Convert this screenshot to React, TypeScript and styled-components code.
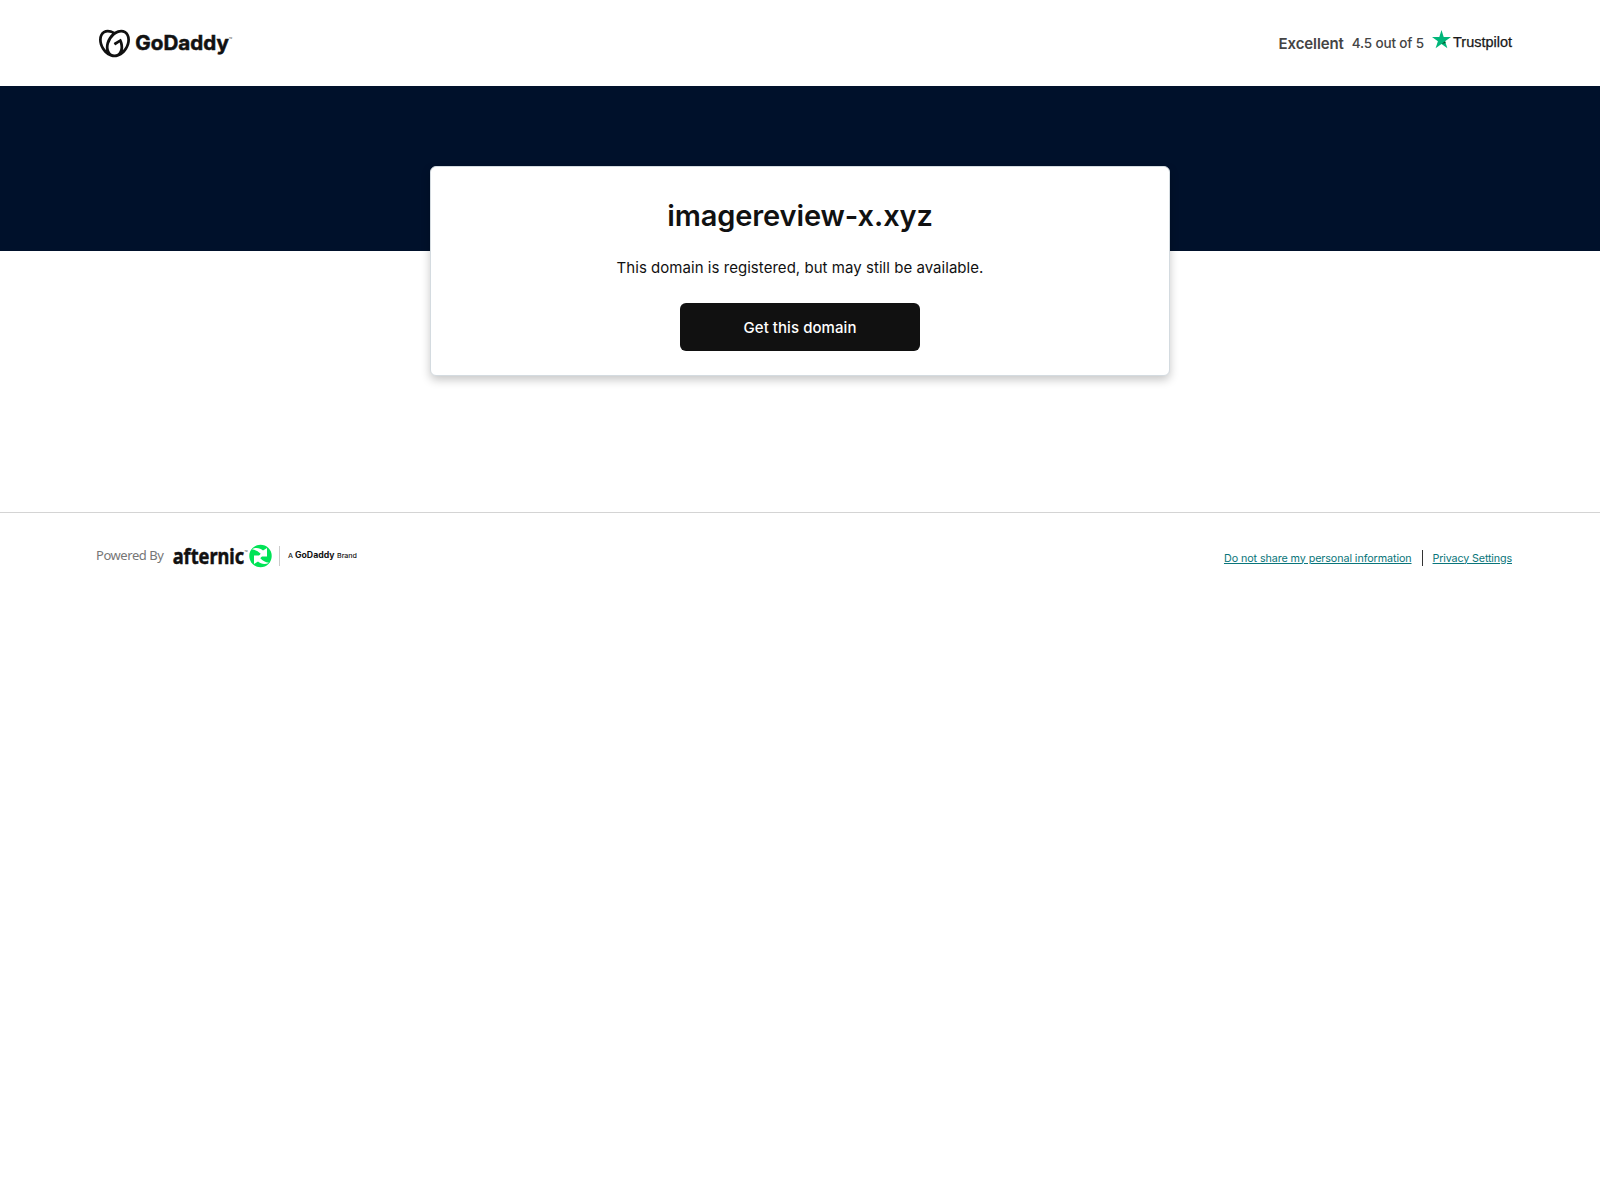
import React from "react";
import styled, { createGlobalStyle } from "styled-components";
import { SiGodaddy } from "react-icons/si";

const GlobalStyle = createGlobalStyle`
  *, *::before, *::after { box-sizing: border-box; }
  body {
    margin: 0;
    background: #fff;
    color: #111;
    font-family: Inter, "Noto Sans", "Liberation Sans", sans-serif;
  }
`;

const Header = styled.header`
  display: flex;
  justify-content: space-between;
  align-items: center;
  height: 86px;
  padding: 0 88px 0 96px;
`;

const Brand = styled.div`
  display: flex;
  align-items: center;
  gap: 5px;
  padding-left: 3px;
  color: #111;
`;

const Wordmark = styled.svg`
  display: block;
  overflow: visible;
  letter-spacing: 0;
`;

const Rating = styled.div`
  display: flex;
  align-items: center;
  color: #444;
  line-height: 24px;
`;

const Verdict = styled.span`
  font-size: 15px;
  font-weight: 600;
  letter-spacing: -0.1px;
  margin: 1px 8px 0 0;
`;

const Score = styled.span`
  font-size: 13.5px;
  font-weight: 500;
  letter-spacing: -0.15px;
  margin-right: 8px;
`;

const Hero = styled.section`
  display: flex;
  justify-content: center;
  align-items: flex-start;
  height: 165px;
  padding-top: 80px;
  background: #00112b;
`;

const Card = styled.main`
  display: flex;
  flex-direction: column;
  align-items: center;
  width: 740px;
  height: 210px;
  padding-top: 28px;
  background: #fff;
  border: 1px solid #d4dbe0;
  border-radius: 6px;
  box-shadow: 0 4px 10px rgba(0, 0, 0, 0.22);
`;

const Domain = styled.h1`
  margin: 0;
  font-size: 29px;
  line-height: 41px;
  font-weight: 640;
  letter-spacing: -0.1px;
`;

const Message = styled.p`
  margin: 20px 0 23px;
  font-size: 15px;
  line-height: 24px;
  letter-spacing: 0.04px;
`;

const BuyButton = styled.button`
  width: 240px;
  height: 48px;
  padding: 2px 0 0;
  border: 0;
  border-radius: 6px;
  background: #111;
  color: #fff;
  font: 500 15px/24px Inter, "Noto Sans", sans-serif;
  letter-spacing: 0.06px;
  cursor: pointer;
`;

const Footer = styled.footer`
  display: flex;
  justify-content: space-between;
  align-items: center;
  height: 86px;
  margin-top: 261px;
  padding: 0 88px 0 96px;
  border-top: 1px solid #d4d4d4;
`;

const Powered = styled.div`
  display: flex;
  align-items: center;
  color: #767676;
`;

const PoweredLabel = styled.span`
  width: 77px;
  padding-bottom: 1px;
  font-family: "Noto Sans", sans-serif;
  font-size: 13px;
  line-height: 23px;
  letter-spacing: -0.45px;
  white-space: nowrap;
`;

const Links = styled.nav`
  display: flex;
  align-items: center;
  gap: 10px;
  padding-top: 4px;
`;

const FooterLink = styled.a<{ $tracking: number }>`
  padding-top: 1px;
  color: #09757a;
  font-size: 10.75px;
  line-height: 17px;
  letter-spacing: ${(p) => p.$tracking}px;
  text-decoration: underline;
`;

const Separator = styled.span`
  width: 1px;
  height: 16px;
  background: #333;
`;

function GoDaddyLogo() {
  return (
    <Brand>
      <SiGodaddy size={31} />
      <Wordmark width="98" height="36" viewBox="0 0 98 36" fill="#111">
        <text x="0.3" y="25.200" fontFamily="Inter, sans-serif" fontSize="20" fontWeight="700" stroke="#111" strokeWidth="0.5" textLength="93.500" lengthAdjust="spacingAndGlyphs">GoDaddy</text>
        <text x="94" y="14" fontFamily="Inter, sans-serif" fontSize="2">TM</text>
      </Wordmark>
    </Brand>
  );
}

function TrustpilotLogo() {
  return (
    <Wordmark width="80" height="24" viewBox="0 0 80 24">
      <path d="M9.500-1 11.700 6H19l-5.900 4.300 2.300 7-5.900-4.300-5.900 4.300 2.300-7L0 6h7.300z" fill="#00b67a" />
      <path d="m13.600 11.900-.5-1.600-3.600 2.700z" fill="#005128" />
      <text x="21" y="16" fontFamily="Liberation Sans, sans-serif" fontSize="14" fill="#191919" stroke="#191919" strokeWidth="0.25" textLength="59" lengthAdjust="spacingAndGlyphs">Trustpilot</text>
    </Wordmark>
  );
}

function AfternicLogo() {
  return (
    <Wordmark width="186" height="24" viewBox="0 0 186 24" fill="#111">
      <text x="-0.3" y="20" fontFamily="Noto Sans, sans-serif" fontSize="21" fontWeight="700" stroke="#111" strokeWidth="0.5" strokeLinejoin="round" textLength="71.500" lengthAdjust="spacingAndGlyphs">afternic</text>
      <text x="71.500" y="8" fontFamily="Inter, sans-serif" fontSize="2">TM</text>
      <circle cx="87.500" cy="12" r="11.200" fill="#00e356" />
      <g transform="translate(-0.500 0)" fill="#fff">
        <path d="M79.500 5.200c4-2.200 8.500-1 11 1.300l4-2.500v8.500h-8.500l2.200-2.700c-2.500-2.600-5-3.800-8.700-4.600z" />
        <path d="M96.500 18.800c-4 2.200-8.500 1-11-1.300l-4 2.500v-8.500h8.500l-2.200 2.700c2.500 2.600 5 3.800 8.700 4.600z" />
      </g>
      <rect x="106" y="2" width="1" height="20" fill="#ccc" />
      <text x="115" y="14" fontFamily="Inter, sans-serif" fontSize="6.500" fontWeight="500" textLength="5" lengthAdjust="spacingAndGlyphs">A</text>
      <text x="122" y="14" fontFamily="Inter, sans-serif" fontSize="8.300" fontWeight="700" textLength="39.500" lengthAdjust="spacingAndGlyphs">GoDaddy</text>
      <text x="164" y="14" fontFamily="Inter, sans-serif" fontSize="6.500" fontWeight="500" textLength="20" lengthAdjust="spacingAndGlyphs">Brand</text>
    </Wordmark>
  );
}

export default function App() {
  return (
    <>
      <GlobalStyle />
      <Header>
        <GoDaddyLogo />
        <Rating>
          <Verdict>Excellent</Verdict>
          <Score>4.5 out of 5</Score>
          <TrustpilotLogo />
        </Rating>
      </Header>
      <Hero>
        <Card>
          <Domain>imagereview-x.xyz</Domain>
          <Message>This domain is registered, but may still be available.</Message>
          <BuyButton>Get this domain</BuyButton>
        </Card>
      </Hero>
      <Footer>
        <Powered>
          <PoweredLabel>Powered By</PoweredLabel>
          <AfternicLogo />
        </Powered>
        <Links>
          <FooterLink href="#" $tracking={-0.09}>Do not share my personal information</FooterLink>
          <Separator />
          <FooterLink href="#" $tracking={-0.15}>Privacy Settings</FooterLink>
        </Links>
      </Footer>
    </>
  );
}
